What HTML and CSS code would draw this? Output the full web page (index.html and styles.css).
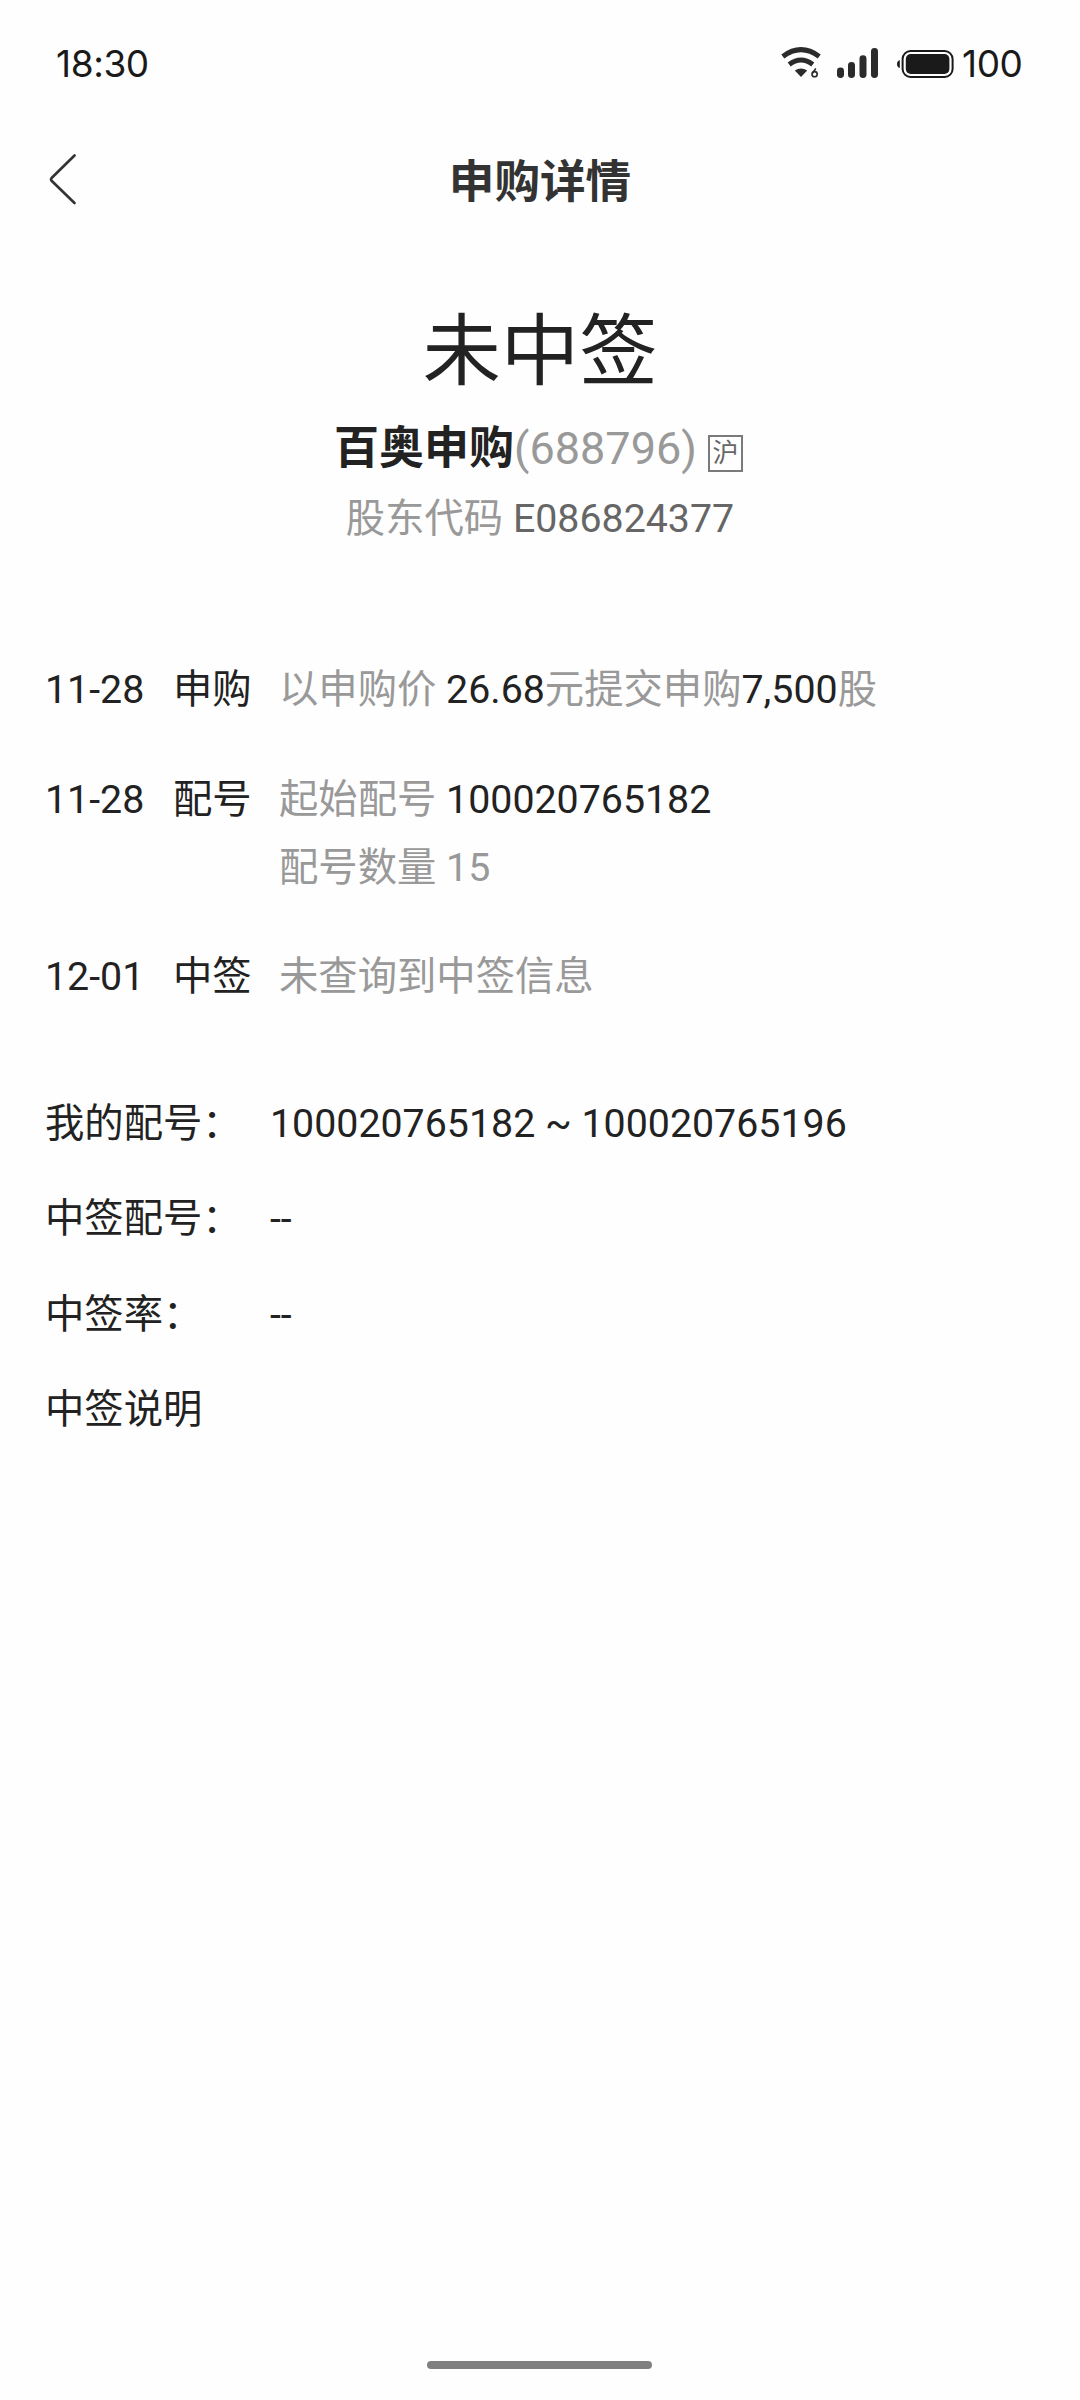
FILE: index.html
```html
<!DOCTYPE html>
<html lang="zh-CN">
<head>
  <meta charset="UTF-8" />
  <meta name="viewport" content="width=device-width, initial-scale=1" />
  <title>申购详情</title>
  <link rel="stylesheet" href="styles.css">
</head>
<body>

  <div class="status-bar">
    <span class="time">18:30</span>
    <div class="status-icons">
      <svg class="wifi" width="40" height="32" viewBox="0 0 40 32">
        <g fill="none" stroke="#2b2b2b" stroke-width="5">
          <path d="M1.8 9.4 Q20 -4.2 38.2 9.4" />
          <path d="M8.2 17.4 Q20 8.6 31.8 17.4" />
        </g>
        <path d="M13.8 23.4 Q20 19.6 26.2 23.4 L20 30 Z" fill="#2b2b2b" />
        <path d="M34.8 21.6 L31.4 26.2" fill="none" stroke="#2b2b2b" stroke-width="1.6" />
        <circle cx="33.6" cy="27.2" r="2.6" fill="none" stroke="#2b2b2b" stroke-width="1.6" />
      </svg>
      <svg class="signal" width="41" height="30" viewBox="0 0 41 30" fill="#2b2b2b">
        <rect x="0" y="19.5" width="7" height="10.5" rx="3.4" />
        <rect x="11" y="14" width="7" height="16" rx="3.4" />
        <rect x="22.5" y="7.3" width="7" height="22.7" rx="3.4" />
        <rect x="34" y="0" width="7" height="30" rx="3.4" />
      </svg>
      <svg class="battery" width="57" height="28" viewBox="0 0 57 28">
        <path d="M2.8 10 V18 Q0 17 0 14 Q0 11 2.8 10 Z" fill="#1a1a1a" />
        <rect x="5.6" y="1" width="50" height="26" rx="8" fill="none" stroke="#1a1a1a" stroke-width="2" />
        <rect x="8.8" y="4" width="43.6" height="20" rx="5" fill="#1a1a1a" />
      </svg>
      <span class="level">100</span>
    </div>
  </div>

  <div class="nav">
    <svg class="back" width="28" height="54" viewBox="0 0 28 54">
      <path d="M25.5 2.5 L2.6 25 Q1.4 26.4 2.6 27.8 L25.5 50" fill="none" stroke="#333" stroke-width="2.6" stroke-linecap="round" />
    </svg>
    <h1>申购详情</h1>
  </div>

  <div class="summary">
    <div class="result">未中签</div>
    <div class="stock"><b>百奥申购</b><span class="code">(688796)</span><span class="market">沪</span></div>
    <div class="holder">股东代码 <span>E086824377</span></div>
  </div>

  <div class="steps">
    <div class="step">
      <span class="date">11-28</span>
      <span class="name">申购</span>
      <div class="desc">以申购价 <em>26.68</em>元提交申购<em>7,500</em>股</div>
    </div>
    <div class="step">
      <span class="date">11-28</span>
      <span class="name">配号</span>
      <div class="desc">起始配号 <em>100020765182</em><br>配号数量 15</div>
    </div>
    <div class="step">
      <span class="date">12-01</span>
      <span class="name">中签</span>
      <div class="desc">未查询到中签信息</div>
    </div>
  </div>

  <div class="info">
    <div class="row"><span class="label">我的配号：</span><span>100020765182 ~ 100020765196</span></div>
    <div class="row"><span class="label">中签配号：</span><span>--</span></div>
    <div class="row"><span class="label">中签率：</span><span>--</span></div>
    <div class="row"><span class="label">中签说明</span></div>
  </div>

  <div class="home-bar"></div>

</body>
</html>
```
FILE: styles.css
```css
* {
  box-sizing: border-box;
}
body {
  margin: 0;
  height: 2400px;
  display: flex;
  flex-direction: column;
  background: #fefefe;
  color: #222;
  font-family: Roboto, "Noto Sans CJK SC", sans-serif;
  font-size: 39.35px;
}
.status-bar {
  height: 126px;
  padding: 0 56px;
  display: flex;
  justify-content: space-between;
  align-items: center;
  color: #1a1a1a;
  font-family: Inter, sans-serif;
  font-size: 37px;
  letter-spacing: -0.4px;
}
.status-icons {
  display: flex;
  align-items: center;
}
.signal {
  margin-left: 16px;
}
.battery {
  margin: 2px 8px 0 19px;
}
.level {
  width: 62px;
}
.nav {
  height: 108px;
  padding: 0 49px;
  display: flex;
  align-items: center;
}
.nav h1 {
  flex: 1;
  margin: 5px 28px 0 0;
  text-align: center;
  font-size: 45.6px;
  line-height: 60px;
  font-weight: bold;
  color: #333;
}
.summary {
  display: flex;
  flex-direction: column;
  align-items: center;
  padding-top: 62px;
}
.result {
  font-size: 78.4px;
  line-height: 112px;
}
.stock {
  display: flex;
  align-items: center;
  margin-right: 3px;
  font-size: 45px;
  line-height: 82px;
}
.code {
  color: #999;
}
.market {
  width: 35px;
  height: 37px;
  margin: 8px 0 0 11px;
  border: 2px solid #7a7a7a;
  color: #666;
  font-size: 26px;
  line-height: 32px;
  text-align: center;
}
.holder {
  line-height: 58px;
  color: #999;
}
.holder span {
  color: #666;
}
.steps {
  display: flex;
  flex-direction: column;
  gap: 41.5px;
  padding: 108px 45px 0;
  line-height: 68px;
}
.step {
  display: flex;
}
.date {
  width: 128px;
}
.name {
  width: 106px;
}
.desc {
  color: #999;
}
.desc em {
  font-style: normal;
  color: #222;
}
.info {
  padding: 66px 45px 0;
  line-height: 95.4px;
}
.row {
  display: flex;
}
.label {
  width: 225px;
}
.home-bar {
  width: 225px;
  height: 8px;
  margin: auto 428px 31px 427px;
  border-radius: 4px;
  background: #808080;
}
```
